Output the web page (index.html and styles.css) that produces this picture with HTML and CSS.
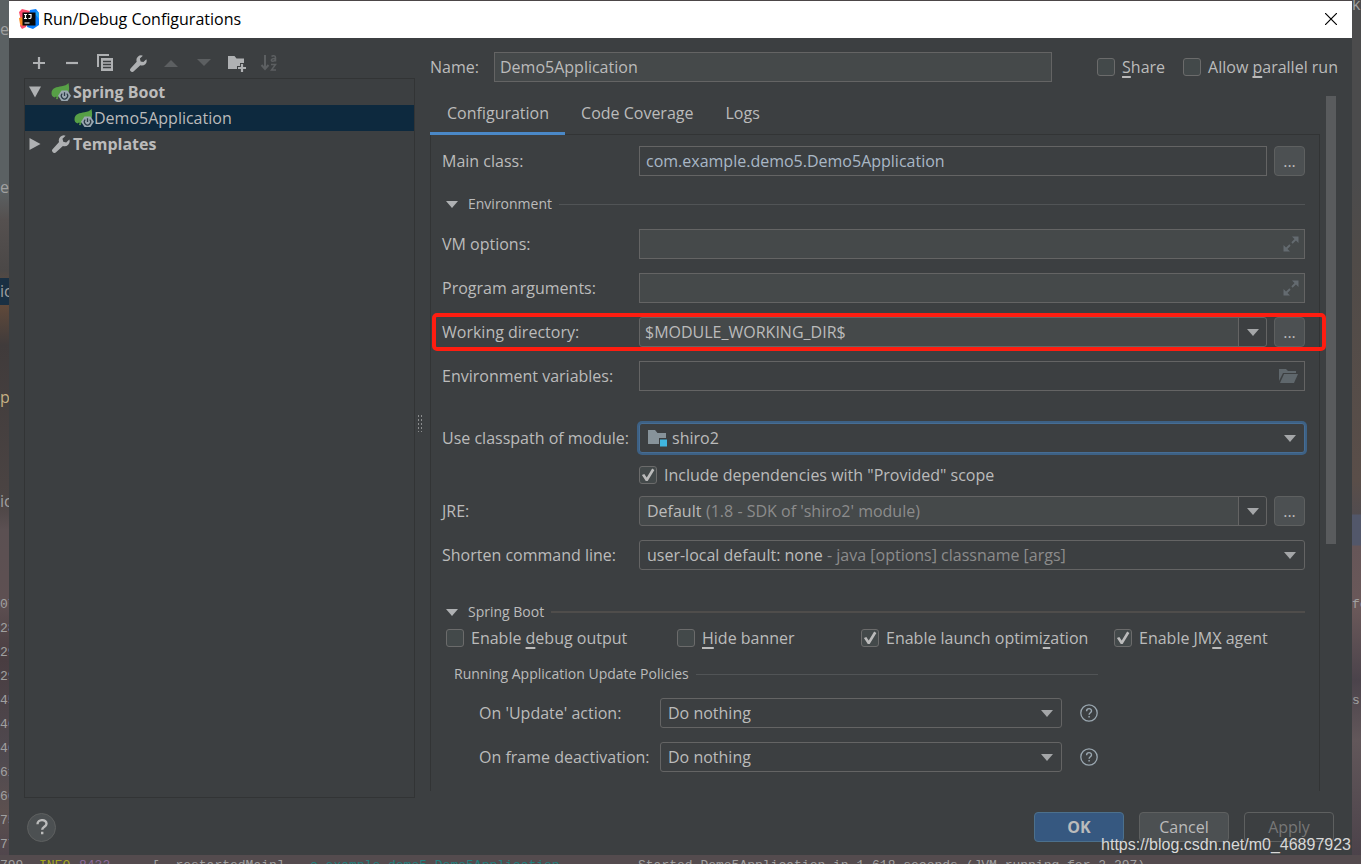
FILE: index.html
```html
<!DOCTYPE html>
<html lang="en">
<head>
<meta charset="utf-8">
<title>Run/Debug Configurations</title>
<link rel="stylesheet" href="styles.css">
</head>
<body>
<svg class="defs" aria-hidden="true">
  <symbol id="arrow" viewBox="0 0 12 7"><path d="M0 0h12L6 7z" fill="currentColor"/></symbol>
  <symbol id="wrench" viewBox="0 0 16 16"><path d="M15.4 3.9 12.6 6.7 10 6 9.300 3.400 12.100.6a4.500 4.500 0 0 0-5.800 5.700L.7 12.400a2 2 0 0 0 2.900 2.900L9.700 9.700a4.500 4.500 0 0 0 5.700-5.800z" fill="#afb1b3"/></symbol>
  <symbol id="spring" viewBox="0 0 20 18"><path d="M17.500 0c.8 4 1 7.500-.5 10.500l-3-2-5 2-2 4.500-2-1.500-1.500 1C1.500 13.500.5 12.500.5 10.500.5 4.500 6 4 10.500 3.200c3-.5 5.500-1.200 7-3.200z" fill="#57a046"/><circle cx="6" cy="15.300" r="1" fill="#57a046"/><path d="M10.500 7.500h6l3.500 5.200-3.500 5.300h-6L7 12.700z" fill="#9aa7b0"/><path d="M11.300 10.600a3.100 3.100 0 1 0 4.400 0M13.500 9.200v3.800" fill="none" stroke="#2c3b46" stroke-width="1.300"/></symbol>
  <symbol id="expand" viewBox="0 0 16 16"><path d="M9 .5h6.500V7zM.5 9v6.500H7z" fill="currentColor"/><path d="m13 3-4 4M7 9l-4 4" stroke="currentColor" stroke-width="1.800"/></symbol>
  <symbol id="question" viewBox="0 0 18 18"><circle cx="9" cy="9" r="8.200" fill="none" stroke="#9aa7b0" stroke-width="1.300"/><path d="M6.600 7.200c0-3.500 5-3.200 4.900-.3 0 1.700-2.400 1.900-2.400 3.800M9.100 11.900v1.700" fill="none" stroke="#9aa7b0" stroke-width="1.400"/></symbol>
</svg>

<div class="editor" aria-hidden="true">
  <div class="edge">
    <span class="e1">er</span><span class="e2">e</span><span class="e3">ic</span><span class="e4">p</span><span class="e5">ic</span>
    <pre class="console">07
28
29
29
45
46
46
61
66
75
77</pre>
  </div>
  <div class="edge right">
    <span class="e0">ke</span>
    <pre class="console">fo



s</pre>
  </div>
  <div class="logline"><span>799</span><span class="info">INFO</span><span class="pid">8432</span><span>[  restartedMain]</span><span class="logger">c.example.demo5.Demo5Application</span><span>Started Demo5Application in 1.618 seconds (JVM running for 2.297)</span></div>
</div>

<main class="dialog">
  <header class="titlebar">
    <svg class="logo" viewBox="0 0 20 20"><path d="M0 3 3 0l8 2-4 16-4 2-2-3 1-5z" fill="#fc4c6c"/><path d="m0 9 3-1 3 8-3 1-2-2z" fill="#f98a22"/><path d="m11 1 6-1 3 4v12l-6 4-6-2z" fill="#087cfa"/><path d="m17 2 3 2v6l-4-5z" fill="#20a4f3"/><path d="M3.500 3.500h13v13h-13z" fill="#080808"/><path d="M5 5.500h3M6.500 5.500v4M5 9.500h3M9.500 5.500H12v3c0 1-1.500 1.300-2.500.7M5.500 14h5" fill="none" stroke="#fff" stroke-width="1.200"/></svg>
    <h1>Run/Debug Configurations</h1>
    <button class="close" aria-label="Close"><svg viewBox="0 0 12 12"><path d="m0 0 12 12M12 0 0 12" stroke="#000" stroke-width="1.200"/></svg></button>
  </header>

  <div class="content">
    <section class="side">
      <div class="toolbar">
        <button aria-label="Add"><svg viewBox="0 0 20 20"><path d="M10 4v12M4 10h12" stroke="#afb1b3" stroke-width="2.200"/></svg></button>
        <button aria-label="Remove"><svg viewBox="0 0 20 20"><path d="M4 10h12" stroke="#afb1b3" stroke-width="2.200"/></svg></button>
        <button aria-label="Copy"><svg viewBox="0 0 20 20"><path d="M3 14V2h11" fill="none" stroke="#afb1b3" stroke-width="2"/><path d="M6 5h12v13H6z" fill="#afb1b3"/><path d="M8 8.500h8M8 11.500h8M8 14.500h8" stroke="#3c3f41" stroke-width="1.300"/></svg></button>
        <button aria-label="Edit templates"><svg viewBox="-2 -2 20 20"><use href="#wrench" width="17" height="17"/></svg></button>
        <button aria-label="Move up" disabled><svg viewBox="0 0 20 20"><path d="M3 14h14l-7-7z" fill="#5c5f61"/></svg></button>
        <button aria-label="Move down" disabled><svg viewBox="0 0 20 20"><path d="M3 6h14l-7 7z" fill="#5c5f61"/></svg></button>
        <button aria-label="Create folder"><svg viewBox="0 0 20 20"><path d="M1 3h6.500l2 2.500H17V10h-4v3h-3v3H1z" fill="#afb1b3"/><path d="M15 11v8M11 15h8" stroke="#afb1b3" stroke-width="2.200"/></svg></button>
        <button aria-label="Sort" disabled><svg viewBox="0 0 20 20"><path d="M5 2v14M1.500 12 5 16l3.500-4" fill="none" stroke="#5c5f61" stroke-width="2"/><path d="M11.500 3.500c1-1 4-1 4 .8V8.500M15 5.500c-4-.3-4.500 2.500-2.500 2.700 1.500 0 2.500-.7 2.500-1.700M11 11.500h4.500L11.500 17H16" fill="none" stroke="#5c5f61" stroke-width="1.500"/></svg></button>
      </div>
      <ul class="tree">
        <li class="group"><svg class="open" viewBox="0 0 12 11"><path d="M0 0h12L6 11z" fill="#afb1b3"/></svg><svg class="icon"><use href="#spring"/></svg>Spring Boot</li>
        <li class="leaf"><svg class="icon"><use href="#spring"/></svg>Demo5Application</li>
        <li class="group"><svg class="open" viewBox="0 0 11 12"><path d="M0 0v12l11-6z" fill="#afb1b3"/></svg><svg class="icon"><use href="#wrench"/></svg>Templates</li>
      </ul>
    </section>
    <div class="grip" aria-hidden="true"></div>

    <section class="main">
      <div class="namerow">
        <label for="name">Name:</label>
        <input id="name" class="field" value="Demo5Application">
        <label class="check"><input type="checkbox"><span><u>S</u>hare</span></label>
        <label class="check"><input type="checkbox"><span>Allow <u>p</u>arallel run</span></label>
      </div>
      <div class="scroller">
        <div class="pane">
          <nav class="tabs"><button class="active">Configuration</button><button>Code Coverage</button><button>Logs</button></nav>
          <form class="form">
            <div class="row">
              <label for="mainclass">Main class:</label>
              <input id="mainclass" class="field plain" value="com.example.demo5.Demo5Application">
              <button type="button" class="more" aria-label="Browse main class">...</button>
            </div>
            <h2 class="divider env"><svg><use href="#arrow"/></svg>Environment</h2>
            <div class="rows">
              <div class="row"><label for="vm">VM options:</label><div class="combo box"><input id="vm"><svg class="grow"><use href="#expand"/></svg></div></div>
              <div class="row"><label for="args">Program arguments:</label><div class="combo box"><input id="args"><svg class="grow"><use href="#expand"/></svg></div></div>
              <div class="row marked"><label for="wd">Working directory:</label><div class="combo round"><input id="wd" value="$MODULE_WORKING_DIR$"><button type="button" class="drop" aria-label="Show directories"><svg><use href="#arrow"/></svg></button></div><button type="button" class="more" aria-label="Browse directory">...</button></div>
              <div class="row"><label for="envvars">Environment variables:</label><div class="combo box plain"><input id="envvars"><svg class="folder" viewBox="0 0 19 14"><path d="M0 0h7l2 2h8v2H4L0 12z" fill="#5f676c"/><path d="M5 5h14l-4 9H1z" fill="#5f676c"/></svg></div></div>
            </div>
            <div class="rows second">
              <div class="row"><label for="module">Use classpath of module:</label><div class="combo round plain focus"><svg class="module" viewBox="0 0 20 18"><path d="M0 1h7l2.500 3H18v5h-7v6H0z" fill="#87939a"/><path d="M12 10.500h7v7h-7z" fill="#40b6e0"/></svg><select id="module"><option>shiro2</option></select><svg class="arrow"><use href="#arrow"/></svg></div></div>
            </div>
            <label class="check provided"><input type="checkbox" checked><span>Include dependencies with "Provided" scope</span></label>
            <div class="rows">
              <div class="row"><label for="jre">JRE:</label><div class="combo round"><select id="jre"><option>Default</option></select><span class="hint">(1.8 - SDK of 'shiro2' module)</span><button type="button" class="drop" aria-label="Show runtimes"><svg><use href="#arrow"/></svg></button></div><button type="button" class="more" aria-label="Browse runtime">...</button></div>
              <div class="row"><label for="shorten">Shorten command line:</label><div class="combo round plain"><select id="shorten"><option>user-local default: none</option></select><span class="hint">- java [options] classname [args]</span><svg class="arrow"><use href="#arrow"/></svg></div></div>
            </div>
            <h2 class="divider boot"><svg><use href="#arrow"/></svg>Spring Boot</h2>
            <div class="checks">
              <label class="check"><input type="checkbox"><span>Enable <u>d</u>ebug output</span></label>
              <label class="check"><input type="checkbox"><span><u>H</u>ide banner</span></label>
              <label class="check"><input type="checkbox" checked><span>Enable launch optimi<u>z</u>ation</span></label>
              <label class="check"><input type="checkbox" checked><span>Enable JM<u>X</u> agent</span></label>
            </div>
            <section class="policies">
              <h2 class="divider">Running Application Update Policies</h2>
              <div class="rows">
                <div class="row"><label for="upd">On 'Update' action:</label><div class="combo round plain"><select id="upd"><option>Do nothing</option></select><svg class="arrow"><use href="#arrow"/></svg></div><svg class="help"><use href="#question"/></svg></div>
                <div class="row"><label for="deact">On frame deactivation:</label><div class="combo round plain"><select id="deact"><option>Do nothing</option></select><svg class="arrow"><use href="#arrow"/></svg></div><svg class="help"><use href="#question"/></svg></div>
              </div>
            </section>
          </form>
        </div>
        <div class="scrollbar"><div class="thumb"></div></div>
      </div>
    </section>
  </div>

  <footer class="footer">
    <button class="helpbtn" aria-label="Help"><svg viewBox="0 0 12 16"><path d="M1.500 5.200C1.500-.2 10.500 0 10.500 4.800c0 3-4.300 3-4.300 6M6.200 12.700v2.500" fill="none" stroke="#bbb" stroke-width="2.400"/></svg></button>
    <button class="btn primary">OK</button>
    <button class="btn">Cancel</button>
    <button class="btn" disabled>Apply</button>
  </footer>
</main>
<div class="watermark">https://blog.csdn.net/m0_46897923</div>
</body>
</html>
```
FILE: styles.css
```css
* { box-sizing: border-box; }

body {
  margin: 0;
  min-height: 100vh;
  display: flex;
  flex-direction: column;
  padding: 1px 9px 9px;
  position: relative;
  overflow: hidden;
  font-family: "Open Sans", "Noto Sans", sans-serif;
  font-size: 16px;
  line-height: 20px;
  color: #bbbbbb;
  background: #4c4648;
}

button, input, select { font: inherit; color: inherit; margin: 0; padding: 0; border: 0; background: none; outline: 0; }
svg { display: block; flex: none; }
.defs { position: absolute; width: 0; height: 0; }
u { text-underline-offset: 3px; text-decoration-thickness: 2px; text-decoration-skip-ink: none; }

/* Editor window behind the dialog */
.editor { position: absolute; inset: 0; overflow: hidden; color: #a0a0a0; }
.edge {
  position: absolute;
  inset: 0 auto 0 0;
  width: 9px;
  background: linear-gradient(#5b6163 0 190px, #55504f 220px, #4b4847 270px, #644b3a 300px, #403b3b 345px, #4b4443 500px, #5b5052 530px, #5e5052 600px, #493d41 660px, #504a50 760px, #5c504f 810px, #4e444c);
}
.edge span { position: absolute; left: 0; }
.edge .e0 { top: -6px; }
.edge .e1 { top: 19px; }
.edge .e2 { top: 177px; }
.edge .e3 { top: 278px; line-height: 27px; background: #1a3043; }
.edge .e4 { top: 387px; color: #c5b083; }
.edge .e5 { top: 491px; }
.console { position: absolute; left: 0; top: 593px; margin: 0; font: 13px/24px "Liberation Mono", monospace; }
.edge.right {
  inset: 0 0 0 auto;
  background: linear-gradient(#4b4b4c 0 180px, #504b48 260px, #5a4e49 480px, #524c4f 514px, #52576a 515px 545px, #665658 546px, #6a5859 610px, #4b434b 680px, #62575a 740px, #4a4149);
}
.logline {
  position: absolute;
  inset: auto 0 0 0;
  height: 9px;
  display: grid;
  grid-template-columns: 39px 40px 73px 158px 328px 1fr;
  overflow: hidden;
  white-space: pre;
  background: #544b4e;
  padding-top: 3px;
  font: 13px/16px "Liberation Mono", monospace;
}
.info { color: #a3a51e; }
.pid { color: #8c6a9c; }
.logger { color: #23807f; }

/* Dialog */
.dialog { position: relative; flex: 1; display: flex; flex-direction: column; background: #3c3f41; }
.titlebar { display: flex; align-items: center; height: 37px; padding: 0 15px 1px 10px; background: #fff; color: #000; }
.logo { width: 20px; height: 20px; margin-right: 4px; }
h1 { flex: 1; margin: 0; font-size: 16px; font-weight: 400; }
.close svg { width: 12px; height: 12px; }

.content { flex: 1; display: flex; padding: 0 14px 0 15px; }
.side { flex: 0 0 391px; display: flex; flex-direction: column; }
.toolbar { display: flex; gap: 13px; padding: 15px 5px 5px; }
.toolbar svg { width: 20px; height: 20px; }
.tree { flex: 1; margin: 0; padding: 0; list-style: none; border: 1px solid #323435; }
.tree li { display: flex; align-items: center; height: 26px; }
.group { font-weight: 700; padding-left: 4px; }
.leaf { padding-left: 49px; background: #0d293e; }
.tree .open { width: 12px; height: 12px; margin-right: 10px; }
.icon { width: 20px; height: 18px; margin-right: 2px; }
.leaf .icon { margin-right: 0; }
.grip { align-self: center; width: 5px; height: 18px; margin: 10px 5px 0 2px; background: radial-gradient(circle, #8a8c8d 1px, transparent 1px) 0 0 / 3px 4px; }

.main { flex: 1; min-width: 0; display: flex; flex-direction: column; padding-left: 3px; }
.namerow { display: flex; align-items: center; padding: 14px 0; height: 58px; }
.namerow > label:first-child { width: 64px; }
.namerow .check { margin-left: 18px; }
.namerow .field + .check { margin-left: 45px; }
.field { flex: 1; min-width: 0; height: 30px; padding: 0 5px; border: 1px solid #646464; background: #45494a; }
.field.plain { background: none; color: #a9b7c6; padding: 0 6px; }
.check { display: flex; align-items: center; gap: 7px; white-space: nowrap; }
.check input { appearance: none; flex: none; width: 18px; height: 18px; border: 1px solid #6b6b6b; border-radius: 3px; background: #43494a; }
.check input:checked::before { content: ""; display: block; height: 16px; background: #bbbbbb; clip-path: polygon(12% 50%, 27% 44%, 42% 66%, 76% 10%, 90% 18%, 48% 88%, 36% 88%); }

.scroller { flex: 1; display: flex; }
.pane { flex: 1; min-width: 0; display: flex; flex-direction: column; }
.tabs { display: flex; border-bottom: 1px solid #323435; }
.tabs button { height: 39px; padding: 0 16px 2px; margin-bottom: -1px; border-bottom: 3px solid transparent; }
.tabs .active { border-bottom-color: #4a88c7; padding-left: 17px; }
.form { border: solid #323435; border-width: 0 1px; padding: 11px 14px 19px 11px; }

.rows { display: grid; gap: 14px; }
.rows.second { margin: 32px 0 12px; }
.row { display: flex; align-items: center; height: 30px; position: relative; }
.row > label { flex: 0 0 197px; white-space: nowrap; }
.marked::after { content: ""; position: absolute; inset: -4px -21px -4px -10px; border: 4px solid #ff1d10; border-radius: 5px; pointer-events: none; z-index: 1; }
.more { width: 31px; height: 30px; margin-left: 7px; border: 1px solid #5e6060; border-radius: 4px; background: #4c5052; }

.combo { flex: 1; min-width: 0; height: 30px; display: flex; align-items: center; border: 1px solid #646464; background: #45494a; }
.combo.round { border-radius: 3px; }
.combo.plain { background: #3c3f41; }
.combo.focus { border-color: #466d94; box-shadow: 0 0 0 2px #3d6185; }
.combo input { flex: 1; min-width: 0; padding-left: 5px; }
.combo select { appearance: none; padding-left: 7px; }
.combo .module + select { padding-left: 4px; }
.combo .hint { color: #8c8c8c; margin-left: 4px; white-space: nowrap; }
.drop { display: flex; align-items: center; justify-content: center; width: 28px; height: 28px; margin-left: auto; border-left: 1px solid #646464; background: #3c3f41; border-radius: 0 3px 3px 0; }
.drop svg, .arrow { width: 12px; height: 7px; color: #a4a6a8; }
.arrow { margin: 0 8px 0 auto; }
.grow { width: 16px; height: 16px; margin-right: 5px; color: #646b70; }
.folder { width: 19px; height: 14px; margin-right: 6px; }
.module { width: 20px; height: 18px; margin-left: 8px; }

.divider { display: flex; align-items: center; height: 20px; margin: 0; font-size: 14px; font-weight: 400; }
.divider::after { content: ""; flex: 1; height: 1px; margin-left: 7px; background: #515456; }
.divider svg { width: 12px; height: 7px; margin: 0 10px 0 4px; color: #afb1b3; }
.env { margin: 18px 0 15px; }
.boot { margin: 32px 0 6px; }
.boot::after { height: 2px; background: #4f4d4b; }
.provided { height: 20px; margin: 0 0 11px 197px; }
.checks { display: grid; grid-template-columns: 231fr 184fr 253fr 191fr; height: 20px; margin-left: 4px; }
.policies { width: 76%; margin: 16px 0 0; padding-left: 12px; }
.policies .rows { padding-left: 25px; margin-top: 14px; }
.policies .row > label { flex-basis: 181px; }
.help { width: 18px; height: 18px; margin-left: 18px; }

.scrollbar { flex: 0 0 18px; padding-left: 6px; }
.thumb { width: 10px; height: 448px; background: #595b5d; }

.footer { display: flex; align-items: center; gap: 15px; height: 57px; padding: 1px 18px 0; }
.helpbtn { display: grid; place-items: center; width: 29px; height: 29px; margin-right: auto; border: 1px solid #5e6060; border-radius: 50%; background: #4c5052; }
.helpbtn svg { width: 12px; height: 16px; }
.btn { width: 90px; height: 30px; border: 1px solid #5e6060; border-radius: 4px; background: #4c5052; }
.btn:disabled { background: none; color: #777777; }
.primary { background: #365880; border-color: #4c708c; font-weight: 700; }

.watermark { position: absolute; right: 10px; bottom: 9px; font: 16px/20px "Liberation Sans", Arial, sans-serif; color: #d8d8d8; }
```
